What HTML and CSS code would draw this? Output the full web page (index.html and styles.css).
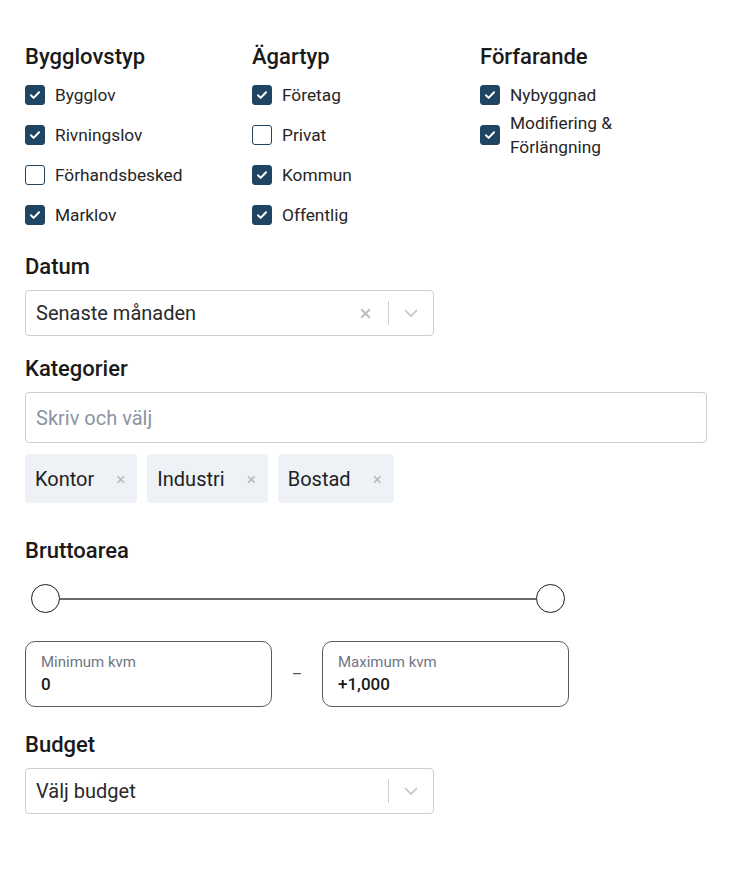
FILE: index.html
```html
<!DOCTYPE html>
<html lang="sv">
<head>
<meta charset="utf-8">
<link rel="stylesheet" href="styles.css">
</head>
<body>
<div class="panel">
  <div class="groups">
    <div class="group">
      <h3 class="title">Bygglovstyp</h3>
      <label class="check"><span class="box on"><svg viewBox="0 0 20 20"><path d="M5.5 10.2l3 3 6-6.2"/></svg></span><span class="lbl">Bygglov</span></label>
      <label class="check"><span class="box on"><svg viewBox="0 0 20 20"><path d="M5.5 10.2l3 3 6-6.2"/></svg></span><span class="lbl">Rivningslov</span></label>
      <label class="check"><span class="box"></span><span class="lbl">Förhandsbesked</span></label>
      <label class="check"><span class="box on"><svg viewBox="0 0 20 20"><path d="M5.5 10.2l3 3 6-6.2"/></svg></span><span class="lbl">Marklov</span></label>
    </div>
    <div class="group">
      <h3 class="title">Ägartyp</h3>
      <label class="check"><span class="box on"><svg viewBox="0 0 20 20"><path d="M5.5 10.2l3 3 6-6.2"/></svg></span><span class="lbl">Företag</span></label>
      <label class="check"><span class="box"></span><span class="lbl">Privat</span></label>
      <label class="check"><span class="box on"><svg viewBox="0 0 20 20"><path d="M5.5 10.2l3 3 6-6.2"/></svg></span><span class="lbl">Kommun</span></label>
      <label class="check"><span class="box on"><svg viewBox="0 0 20 20"><path d="M5.5 10.2l3 3 6-6.2"/></svg></span><span class="lbl">Offentlig</span></label>
    </div>
    <div class="group">
      <h3 class="title">Förfarande</h3>
      <label class="check"><span class="box on"><svg viewBox="0 0 20 20"><path d="M5.5 10.2l3 3 6-6.2"/></svg></span><span class="lbl">Nybyggnad</span></label>
      <label class="check multi"><span class="box on"><svg viewBox="0 0 20 20"><path d="M5.5 10.2l3 3 6-6.2"/></svg></span><span class="lbl">Modifiering &amp;<br>Förlängning</span></label>
    </div>
  </div>

  <h3 class="title sec first">Datum</h3>
  <div class="select">
    <span class="value">Senaste månaden</span>
    <span class="ind">
      <svg class="clear" viewBox="0 0 20 20"><path d="M5 5l10 10M15 5L5 15"/></svg>
      <span class="sep"></span>
      <svg class="chev" viewBox="0 0 20 20"><path d="M4 7l6 6 6-6"/></svg>
    </span>
  </div>

  <h3 class="title sec">Kategorier</h3>
  <div class="textbox"><span class="ph">Skriv och välj</span></div>
  <div class="tags">
    <span class="tag">Kontor<span class="x">×</span></span>
    <span class="tag">Industri<span class="x">×</span></span>
    <span class="tag">Bostad<span class="x">×</span></span>
  </div>

  <h3 class="title sec2">Bruttoarea</h3>
  <div class="slider">
    <span class="knob"></span>
    <span class="track"></span>
    <span class="knob"></span>
  </div>
  <div class="range">
    <div class="field"><span class="flabel">Minimum kvm</span><span class="fval">0</span></div>
    <span class="dash">–</span>
    <div class="field"><span class="flabel">Maximum kvm</span><span class="fval">+1,000</span></div>
  </div>

  <h3 class="title sec">Budget</h3>
  <div class="select">
    <span class="value">Välj budget</span>
    <span class="ind">
      <span class="sep"></span>
      <svg class="chev" viewBox="0 0 20 20"><path d="M4 7l6 6 6-6"/></svg>
    </span>
  </div>
</div>
</body>
</html>
```
FILE: styles.css
```css
* { box-sizing: border-box; }
html, body { margin: 0; background: #fff; }
body {
  font-family: Roboto, "Liberation Sans", sans-serif;
  color: #1c1c1c;
}
.panel {
  padding: 43px 0 40px 25px;
  width: 746px;
}
.title {
  margin: 0;
  font-size: 22px;
  font-weight: 500;
  line-height: 28px;
  color: #1a1a1a;
}
.groups {
  display: grid;
  grid-template-columns: 227px 228px 228px;
}
.group .title { margin-bottom: 14px; }
.check {
  display: flex;
  align-items: center;
  gap: 10px;
  height: 20px;
  margin-bottom: 20px;
  font-size: 17.3px;
  color: #262626;
}
.check.multi { height: 48px; margin-top: -14px; line-height: 24px; }
.box {
  width: 20px;
  height: 20px;
  border-radius: 3px;
  border: 1.5px solid #1f4563;
  background: #fff;
  flex: none;
  display: flex;
}
.box.on { background: #1f4563; }
.box svg { width: 100%; height: 100%; fill: none; stroke: #fff; stroke-width: 2.2; stroke-linecap: round; stroke-linejoin: round; }
.sec { margin-bottom: 9px; }
.sec.first { margin-top: 8px; }
.select {
  width: 409px;
  height: 46px;
  border: 1px solid #cfcfcf;
  border-radius: 4px;
  display: flex;
  align-items: center;
  justify-content: space-between;
  padding: 0 12px 0 10px;
  margin-bottom: 19px;
}
.value { font-size: 20px; color: #2a2a2a; }
.ind { display: flex; align-items: center; }
.clear { width: 17px; height: 17px; fill: none; stroke: #bdbdbd; stroke-width: 2.4; margin-right: 14px; }
.sep { width: 1px; height: 24px; background: #cfcfcf; margin-right: 12px; }
.chev { width: 20px; height: 20px; fill: none; stroke: #c4c4c4; stroke-width: 1.6; }
.textbox {
  width: 682px;
  height: 51px;
  border: 1px solid #cfcfcf;
  border-radius: 4px;
  display: flex;
  align-items: center;
  padding-left: 10px;
  margin-bottom: 11px;
}
.ph { font-size: 20px; color: #8b94a3; }
.tags { display: flex; gap: 10px; margin-bottom: 34px; }
.tag {
  display: flex;
  align-items: center;
  height: 49px;
  padding: 0 12px 0 10px;
  background: #eef1f5;
  border-radius: 4px;
  font-size: 20px;
  color: #1f1f1f;
}
.tag .x { color: #b8b8b8; font-size: 17px; margin-left: 22px; }
.sec2 { margin-bottom: 19px; }
.slider {
  display: flex;
  align-items: center;
  width: 534px;
  margin-left: 6px;
  margin-bottom: 28px;
}
.knob {
  width: 29px;
  height: 29px;
  border-radius: 50%;
  border: 1.5px solid #1a1a1a;
  background: #fff;
  flex: none;
}
.track { flex: 1; height: 2px; background: #6a6a6a; }
.range { display: flex; align-items: center; margin-bottom: 24px; }
.field {
  width: 247px;
  height: 66px;
  border: 1px solid #5a5a5a;
  border-radius: 10px;
  display: flex;
  flex-direction: column;
  justify-content: center;
  padding: 0 15px 0;
}
.flabel { font-size: 15px; color: #6f7684; line-height: 20px; }
.fval { font-size: 17px; font-weight: 500; color: #1a1a1a; line-height: 24px; }
.dash { width: 50px; text-align: center; color: #555; font-size: 16px; }
```
